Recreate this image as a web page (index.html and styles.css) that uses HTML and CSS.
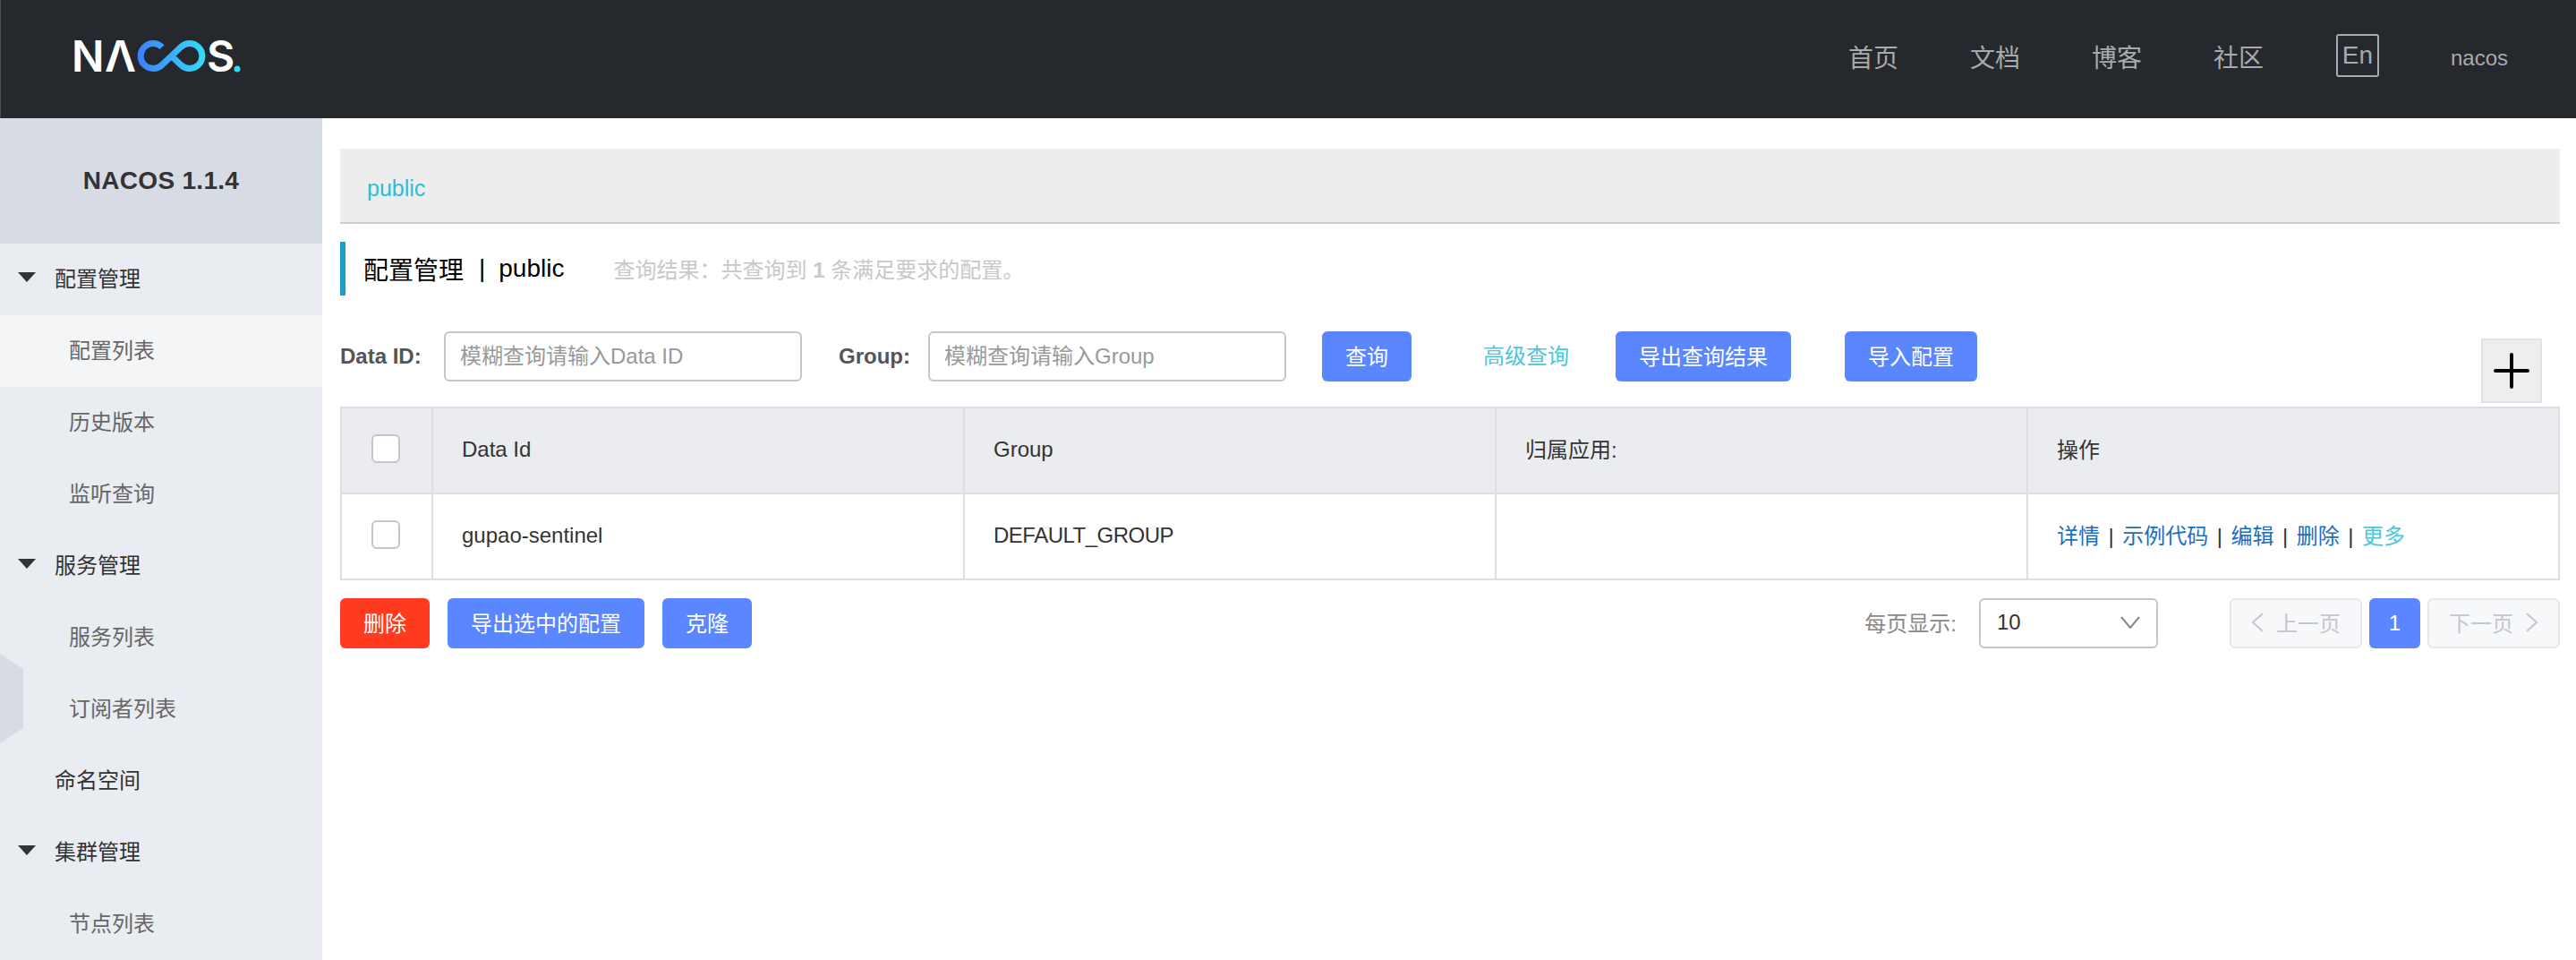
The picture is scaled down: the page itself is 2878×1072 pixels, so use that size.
FILE: index.html
```html
<!DOCTYPE html>
<html>
<head>
    <title>Nacos</title>
    <link rel="stylesheet" href="styles.css">
</head>
<body>
    <div class="header">
        <svg class="logo" width="196" height="80" viewBox="78 26 196 80">
            <defs>
                <linearGradient id="loop" x1="153" y1="0" x2="232" y2="0" gradientUnits="userSpaceOnUse">
                    <stop offset="0" stop-color="#3f7dff"/>
                    <stop offset="1" stop-color="#35e0f5"/>
                </linearGradient>
            </defs>
            <text class="logo-text" x="80" y="80">N</text>
            <text class="logo-text" x="117" y="80">Λ</text>
            <path d="M181 52.6A14 14 0 1 0 181 72.4L202 52.6A14 14 0 1 1 202 72.4L191.500 62.500" fill="none" stroke="url(#loop)" stroke-width="7"/>
            <text class="logo-text" x="231" y="80">S</text>
            <circle cx="265" cy="77" r="3.500" fill="#35d6ec"/>
        </svg>
        <div class="nav">
            <a class="nav-link">首页</a>
            <a class="nav-link">文档</a>
            <a class="nav-link">博客</a>
            <a class="nav-link">社区</a>
            <span class="lang">En</span>
            <span class="user">nacos</span>
        </div>
    </div>

    <div class="layout">
        <div class="sidebar">
            <div class="sidebar-title">NACOS 1.1.4</div>
            <div class="menu-item menu-group"><i class="caret"></i>配置管理</div>
            <div class="menu-item sub active">配置列表</div>
            <div class="menu-item sub">历史版本</div>
            <div class="menu-item sub">监听查询</div>
            <div class="menu-item menu-group"><i class="caret"></i>服务管理</div>
            <div class="menu-item sub">服务列表</div>
            <div class="menu-item sub">订阅者列表</div>
            <div class="menu-item menu-top">命名空间</div>
            <div class="menu-item menu-group"><i class="caret"></i>集群管理</div>
            <div class="menu-item sub">节点列表</div>
            <div class="collapse-handle"></div>
        </div>

        <div class="main">
            <div class="namespace"><a class="namespace-link">public</a></div>

            <div class="page-title">
                <span class="page-name">配置管理</span>
                <span class="page-sep">|</span>
                <span class="page-ns">public</span>
                <span class="page-result">查询结果：共查询到 <b>1</b> 条满足要求的配置。</span>
            </div>

            <div class="filters">
                <label class="filter-label label-data">Data ID:</label>
                <input class="filter-input" type="text" placeholder="模糊查询请输入Data ID">
                <label class="filter-label label-group">Group:</label>
                <input class="filter-input" type="text" placeholder="模糊查询请输入Group">
                <button class="btn btn-query">查询</button>
                <a class="advanced">高级查询</a>
                <button class="btn">导出查询结果</button>
                <button class="btn btn-import">导入配置</button>
                <div class="add-box">
                    <svg width="40" height="40" viewBox="0 0 40 40">
                        <path d="M20 2V38M2 20H38" stroke="#000" stroke-width="4" stroke-linecap="round"/>
                    </svg>
                </div>
            </div>

            <table class="config-table">
                <thead>
                    <tr>
                        <th class="check-cell"><input class="check" type="checkbox"></th>
                        <th>Data Id</th>
                        <th>Group</th>
                        <th class="cjk-cell">归属应用:</th>
                        <th class="cjk-cell">操作</th>
                    </tr>
                </thead>
                <tbody>
                    <tr>
                        <td class="check-cell"><input class="check" type="checkbox"></td>
                        <td>gupao-sentinel</td>
                        <td class="group-name">DEFAULT_GROUP</td>
                        <td></td>
                        <td class="cjk-cell"><a class="op">详情</a><span class="op-sep">|</span><a class="op">示例代码</a><span class="op-sep">|</span><a class="op">编辑</a><span class="op-sep">|</span><a class="op">删除</a><span class="op-sep">|</span><a class="op op-more">更多</a></td>
                    </tr>
                </tbody>
            </table>

            <div class="table-footer">
                <div class="bulk-actions">
                    <button class="btn btn-danger">删除</button>
                    <button class="btn">导出选中的配置</button>
                    <button class="btn">克隆</button>
                </div>
                <div class="pagination">
                    <span class="page-size-label">每页显示:</span>
                    <div class="page-size">
                        <span>10</span>
                        <svg width="22" height="14" viewBox="0 0 22 14">
                            <path d="M1 1L11 13L21 1" fill="none" stroke="#888" stroke-width="2"/>
                        </svg>
                    </div>
                    <div class="pager">
                        <div class="pager-btn">
                            <svg width="14" height="22" viewBox="0 0 14 22">
                                <path d="M13 1L2 11L13 21" fill="none" stroke="#c4c6cf" stroke-width="2"/>
                            </svg>
                            上一页
                        </div>
                        <div class="pager-num">1</div>
                        <div class="pager-btn">
                            下一页
                            <svg width="14" height="22" viewBox="0 0 14 22">
                                <path d="M1 1L12 11L1 21" fill="none" stroke="#c4c6cf" stroke-width="2"/>
                            </svg>
                        </div>
                    </div>
                </div>
            </div>
        </div>
    </div>
</body>
</html>
```

FILE: styles.css
```css
* {
    box-sizing: border-box;
}
body {
    margin: 0;
    height: 1072px;
    overflow: hidden;
    background: white;
    font-family: "Liberation Sans", "Noto Sans CJK SC", sans-serif;
    font-size: 24px;
    color: #333;
}

/* header */
.header {
    height: 132px;
    background: #25292e;
    border-left: 1px solid #4a4e52;
    display: flex;
    align-items: center;
    justify-content: space-between;
}
.logo {
    margin-left: 77px;
}
.logo-text {
    font-family: Inter, sans-serif;
    font-size: 48px;
    font-weight: 600;
    fill: white;
}
.nav {
    display: flex;
    align-items: center;
    color: #a8aaac;
    margin-right: 76px;
    margin-top: -6px;
}
.nav-link {
    font-size: 28px;
    margin-right: 80px;
}
.lang {
    width: 48px;
    height: 48px;
    border: 2px solid #a8aaac;
    border-radius: 3px;
    font-size: 28px;
    display: flex;
    align-items: center;
    justify-content: center;
    margin-left: 1px;
    margin-top: -2px;
}
.user {
    margin-left: 80px;
    font-size: 24px;
    margin-top: 4px;
}

/* sidebar */
.layout {
    display: flex;
    height: 940px;
}
.sidebar {
    width: 360px;
    flex-shrink: 0;
    background: #e9ecf1;
    position: relative;
}
.sidebar-title {
    height: 140px;
    background: #d7dce4;
    display: flex;
    align-items: center;
    justify-content: center;
    font-size: 28px;
    font-weight: bold;
    letter-spacing: 0.3px;
}
.menu-item {
    height: 80px;
    display: flex;
    align-items: center;
    padding-left: 61px;
    padding-bottom: 6px;
}
.menu-item.sub {
    padding-left: 77px;
    color: #666;
}
.menu-item.active {
    background: #f3f5f7;
}
.caret {
    position: absolute;
    left: 20px;
    width: 0;
    height: 0;
    border-left: 10px solid transparent;
    border-right: 10px solid transparent;
    border-top: 11px solid #333;
}
.collapse-handle {
    position: absolute;
    left: 0;
    top: 598px;
    width: 26px;
    height: 100px;
    background: #d7dce4;
    clip-path: polygon(0 0, 100% 17%, 100% 83%, 0 100%);
}

/* main */
.main {
    flex: 1;
    min-width: 0;
    padding: 34px 18px 0 20px;
}
.namespace {
    height: 84px;
    background: #ededed;
    border-bottom: 2px solid #ccc;
    padding: 30px 0 0 30px;
}
.namespace-link {
    color: #2fbcd6;
    font-size: 25px;
}
.page-title {
    margin-top: 20px;
    height: 60px;
    border-left: 6px solid #1c9dcc;
    padding-left: 20px;
    display: flex;
    align-items: center;
    color: #000;
    font-size: 28px;
}
.page-sep {
    margin-left: 17px;
}
.page-ns {
    margin-left: 15px;
}
.page-result {
    margin-left: 55px;
    font-size: 24px;
    color: #c8c8c8;
    padding-bottom: 2px;
}
.filters {
    margin-top: 40px;
    height: 56px;
    display: flex;
    align-items: flex-start;
}
.filter-label {
    font-weight: bold;
    color: #555;
    line-height: 56px;
}
.label-data {
    width: 116px;
}
.label-group {
    width: 100px;
    margin-left: 41px;
}
.filter-input {
    width: 400px;
    height: 56px;
    border: 2px solid #c4c6cf;
    border-radius: 6px;
    padding: 0 16px;
    font-family: inherit;
    font-size: 24px;
    outline: none;
}
.filter-input::placeholder {
    color: #999;
}
.btn {
    height: 56px;
    padding: 0 26px 4px;
    border: none;
    border-radius: 6px;
    background: #5a87ff;
    color: white;
    font-family: inherit;
    font-size: 24px;
    cursor: pointer;
}
.btn-query {
    margin-left: 40px;
}
.btn-import {
    margin-left: 60px;
}
.btn-danger {
    background: #ff3a1e;
}
.advanced {
    color: #4dc6d8;
    line-height: 56px;
    margin: 0 52px 0 80px;
}
.add-box {
    margin-left: auto;
    margin-right: 20px;
    margin-top: 8px;
    width: 68px;
    height: 72px;
    background: #eee;
    border: 2px solid #e3e3e3;
    display: flex;
    align-items: center;
    justify-content: center;
    flex-shrink: 0;
}

/* table */
.config-table {
    margin-top: 28px;
    width: 2480px;
    table-layout: fixed;
    border-collapse: collapse;
    border: 2px solid #dcdee3;
}
.config-table th,
.config-table td {
    height: 96px;
    border: 2px solid #dcdee3;
    padding: 0 32px 3px;
    font-weight: normal;
    text-align: left;
}
.config-table th {
    background: #ebecf0;
}
.config-table .check-cell {
    width: 102px;
    padding: 0;
    text-align: center;
}
.config-table .cjk-cell {
    padding-bottom: 6px;
}
.group-name {
    letter-spacing: -0.5px;
}
.check {
    appearance: none;
    display: block;
    width: 32px;
    height: 32px;
    margin: -4px 0 0 33px;
    background: white;
    border: 2px solid #c4c6cf;
    border-radius: 6px;
}
.op {
    color: #1a6fc0;
}
.op-more {
    color: #4dc6d8;
}
.op-sep {
    margin: 0 9.5px;
}

/* footer */
.table-footer {
    margin-top: 20px;
    display: flex;
    justify-content: space-between;
}
.bulk-actions {
    display: flex;
    gap: 20px;
}
.pagination {
    display: flex;
    align-items: center;
}
.page-size-label {
    color: #888;
    margin-right: 25px;
    padding-bottom: 3px;
}
.page-size {
    width: 200px;
    height: 56px;
    border: 2px solid #c4c6cf;
    border-radius: 6px;
    padding: 0 18px 2px;
    display: flex;
    align-items: center;
    justify-content: space-between;
}
.pager {
    display: flex;
    gap: 8px;
    margin-left: 80px;
}
.pager-btn {
    width: 148px;
    height: 56px;
    background: #f7f8fa;
    border: 2px solid #e6e7eb;
    border-radius: 6px;
    color: #c4c6cf;
    display: flex;
    align-items: center;
    justify-content: center;
    gap: 14px;
    padding-bottom: 3px;
}
.pager-num {
    width: 57px;
    height: 56px;
    background: #5a87ff;
    color: white;
    border-radius: 6px;
    display: flex;
    align-items: center;
    justify-content: center;
}
```
